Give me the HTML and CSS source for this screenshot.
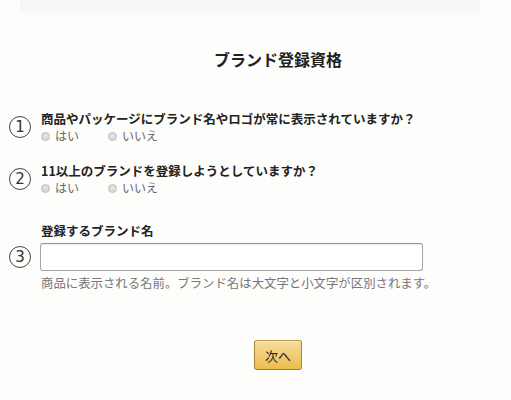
FILE: index.html
```html
<!DOCTYPE html>
<html lang="ja">
<head>
    <meta charset="UTF-8">
    <meta name="viewport" content="width=device-width, initial-scale=1.0">
    <title>ブランド登録資格</title>
    <link rel="stylesheet" href="styles.css">
</head>
<body>

<div class="top-band"></div>

<h1 class="title">ブランド登録資格</h1>

<div class="question">
    <span class="num">1</span>
    <div class="q-body">
        <p class="q-text">商品やパッケージにブランド名やロゴが常に表示されていますか？</p>
        <div class="choices">
            <label class="choice"><span class="radio"></span>はい</label>
            <label class="choice"><span class="radio"></span>いいえ</label>
        </div>
    </div>
</div>

<div class="question">
    <span class="num">2</span>
    <div class="q-body">
        <p class="q-text">11以上のブランドを登録しようとしていますか？</p>
        <div class="choices">
            <label class="choice"><span class="radio"></span>はい</label>
            <label class="choice"><span class="radio"></span>いいえ</label>
        </div>
    </div>
</div>

<div class="brand">
    <p class="q-text brand-label">登録するブランド名</p>
    <div class="brand-row">
        <span class="num">3</span>
        <input class="brand-input" type="text">
    </div>
    <p class="hint">商品に表示される名前。ブランド名は大文字と小文字が区別されます。</p>
</div>

<div class="actions">
    <button class="next-button">次へ</button>
</div>

</body>
</html>
```

FILE: styles.css
```css
body {
    margin: 0;
    background: #fdfdfc;
    color: #222;
    font-family: "Noto Sans CJK JP", "DejaVu Sans", sans-serif;
    overflow: hidden;
}
.top-band {
    margin: 0 31px 0 20px;
    height: 14px;
    background: linear-gradient(#f6f5f3, #faf9f8);
}
.title {
    margin: 34px 0 0;
    padding-left: 45px;
    text-align: center;
    font-size: 16px;
    line-height: 22px;
    font-weight: bold;
    color: #222;
}
.question {
    display: flex;
    align-items: center;
    margin-top: 40px;
    padding-left: 9px;
}
.question + .question {
    margin-top: 19px;
}
.num {
    box-sizing: border-box;
    display: inline-flex;
    align-items: center;
    justify-content: center;
    flex: none;
    width: 22px;
    height: 22px;
    margin-right: 10px;
    border: 1.3px solid #444;
    border-radius: 50%;
    font-family: "DejaVu Sans", sans-serif;
    font-size: 15px;
    color: #333;
}
.q-text {
    margin: 0;
    font-size: 12.5px;
    line-height: 17px;
    font-weight: bold;
    color: #222;
}
.choices {
    display: flex;
    gap: 29px;
    margin-top: 2px;
}
.choice {
    display: flex;
    align-items: center;
    gap: 5px;
    font-size: 12px;
    line-height: 14px;
    color: #666;
}
.radio {
    box-sizing: border-box;
    width: 9px;
    height: 9px;
    border: 1px solid #bdbdbd;
    border-radius: 50%;
    background: radial-gradient(circle at 50% 40%, #e6e6e6, #cfcfcf);
}
.brand {
    margin-top: 27px;
}
.brand-label {
    padding-left: 41px;
    margin-bottom: 4px;
}
.brand-row {
    display: flex;
    align-items: center;
    padding-left: 9px;
}
.brand-input {
    box-sizing: border-box;
    width: 383px;
    height: 28px;
    margin-left: -1px;
    border: 1px solid #a6a6a6;
    border-top-color: #949494;
    border-radius: 3px;
    box-shadow: inset 0 1px 0 rgba(0, 0, 0, 0.07);
    background: #fff;
}
.hint {
    margin: 4px 0 0;
    padding-left: 41px;
    font-size: 12.4px;
    line-height: 16px;
    color: #777;
}
.actions {
    margin-top: 49px;
    padding-left: 45px;
    text-align: center;
}
.next-button {
    box-sizing: border-box;
    height: 30px;
    padding: 0 10px;
    border: 1px solid #a88734;
    border-color: #b9974a #a88734 #9c7e31;
    border-radius: 3px;
    background: linear-gradient(#f6dca0, #ecbd4c);
    box-shadow: inset 0 1px 0 rgba(255, 255, 255, 0.4);
    font-family: "Noto Sans CJK JP", sans-serif;
    font-size: 13px;
    color: #222;
    cursor: pointer;
}
```
